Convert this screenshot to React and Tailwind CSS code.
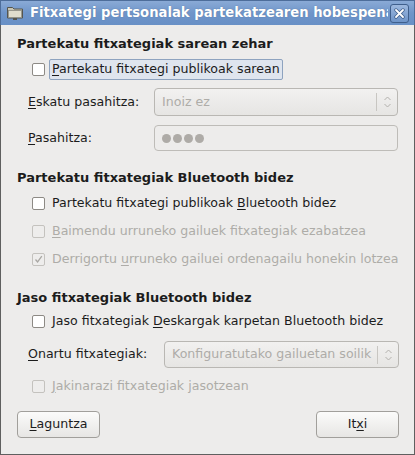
import React from 'react';

const font = { fontFamily: '"DejaVu Sans", Verdana, sans-serif' };

// mnemonic underline helper
const U = ({ children }) => <span className="underline underline-offset-2">{children}</span>;

const Check = ({ checked = false, disabled = false }) => (
  <span
    className={`flex h-[13px] w-[13px] shrink-0 items-center justify-center rounded-[2px] border ${
      disabled ? 'border-[#c4c2be] bg-[#eeedec]' : 'border-[#8d8a85] bg-white'
    }`}
  >
    {checked && (
      <svg width="9" height="9" viewBox="0 0 9 9">
        <path d="M1.5 4.5 L3.6 7 L7.8 1.2" fill="none" stroke="#a9a7a3" strokeWidth="1.3" />
      </svg>
    )}
  </span>
);

const CheckRow = ({ children, checked, disabled, focused, h = 'h-[28px]' }) => (
  <div className={`flex ${h} items-center pl-[31px]`}>
    <Check checked={checked} disabled={disabled} />
    <span
      className={`ml-[4px] flex h-[21px] items-center rounded-[2px] px-[2px] ${
        focused ? 'border border-[#8ea3bf] bg-[#dfe5ee]' : 'border border-transparent'
      } ${disabled ? 'text-[#aeaca8]' : 'text-[#1c1c1c]'}`}
    >
      <span className="whitespace-pre">{children}</span>
    </span>
  </div>
);

const Arrows = () => (
  <svg width="9" height="14" viewBox="0 0 9 14">
    <path d="M1.5 5 L4.5 2 L7.5 5 M1.5 9 L4.5 12 L7.5 9" fill="none" stroke="#b3b1ad" strokeWidth="1" />
  </svg>
);

const Combo = ({ text, className }) => (
  <div
    className={`flex items-center rounded-[4px] border border-[#b9b7b3] bg-gradient-to-b from-[#f2f1f0] to-[#e6e5e3] ${className}`}
  >
    <span className="flex-1 truncate pl-[7px] text-[#aeaca8]">{text}</span>
    <span className="h-[18px] w-px bg-[#c8c6c2]" />
    <span className="flex w-[20px] items-center justify-center">
      <Arrows />
    </span>
  </div>
);

const Heading = ({ children }) => (
  <div className="flex h-[18px] items-center pl-[16px] text-[13px] font-bold text-[#1c1c1c]">{children}</div>
);

const Button = ({ children, className }) => (
  <button
    className={`flex h-[27px] w-[83px] items-center justify-center rounded-[4px] border border-[#a19f9b] bg-gradient-to-b from-[#fbfbfa] to-[#e7e6e4] text-[#1c1c1c] ${className}`}
  >
    <span className="whitespace-pre">{children}</span>
  </button>
);

export default function App() {
  return (
    <div className="flex h-[455px] w-[415px] flex-col overflow-hidden text-[12.6px]" style={font}>
      {/* title bar */}
      <div className="flex h-[25px] shrink-0 items-center border border-b-0 border-[#4d6d9a] bg-gradient-to-b from-[#8aaad6] via-[#6f95c9] to-[#6890c6] pl-[5px] pr-[5px]">
        <svg width="18" height="16" viewBox="0 0 18 16" className="shrink-0">
          <path d="M1.5 2.5 h5 l1.5 1.5 h8.5 v9 h-15 z" fill="#c7c4b2" stroke="#55554f" strokeWidth="1" />
          <rect x="2.5" y="5.5" width="13" height="7" fill="#e0ddcd" stroke="#8b8a80" strokeWidth="0.8" />
          <rect x="7" y="13" width="4" height="2" fill="#55554f" />
        </svg>
        <span className="ml-[6px] flex-1 overflow-hidden whitespace-nowrap text-[13.2px] font-bold text-white [text-shadow:0_0_1px_#4b6a94]">
          Fitxategi pertsonalak partekatzearen hobespenak
        </span>
        <span className="ml-[2px] flex h-[19px] w-[19px] shrink-0 items-center justify-center rounded-[3px] border border-[#3f5f8c] bg-gradient-to-b from-[#9db8de] to-[#6e94c8]">
          <svg width="11" height="11" viewBox="0 0 11 11">
            <path d="M2 2 L9 9 M9 2 L2 9" stroke="#3f5f8c" strokeWidth="3.4" strokeLinecap="round" />
            <path d="M2 2 L9 9 M9 2 L2 9" stroke="#ffffff" strokeWidth="1.8" strokeLinecap="round" />
          </svg>
        </span>
      </div>

      {/* body */}
      <div className="flex flex-1 flex-col border border-t-0 border-[#5f5f5f] bg-[#edeceb] pt-[10px]">
        <Heading>Partekatu fitxategiak sarean zehar</Heading>
        <div className="mt-[5px]">
          <CheckRow focused h="h-[22px]">
            <U>P</U>artekatu fitxategi publikoak sarean
          </CheckRow>
        </div>

        <div className="mt-[8px] flex h-[28px] items-center pl-[27px] pr-[16px]">
          <span className="w-[126px] text-[#1c1c1c]">
            <U>E</U>skatu pasahitza:
          </span>
          <Combo text="Inoiz ez" className="h-[28px] flex-1" />
        </div>

        <div className="mt-[9px] flex h-[26px] items-center pl-[27px] pr-[16px]">
          <span className="w-[126px] text-[#1c1c1c]">
            <U>P</U>asahitza:
          </span>
          <div className="flex h-[26px] flex-1 items-center gap-[2px] rounded-[4px] border border-[#bebcb8] bg-[#edeceb] pl-[7px]">
            {[0, 1, 2, 3].map((i) => (
              <span key={i} className="h-[9px] w-[9px] rounded-full bg-[#aeaba7]" />
            ))}
          </div>
        </div>

        <div className="mt-[18px]">
          <Heading>Partekatu fitxategiak Bluetooth bidez</Heading>
        </div>
        <div className="mt-[2px]">
          <CheckRow>
            Partekatu fitxategi publikoak <U>B</U>luetooth bidez
          </CheckRow>
          <CheckRow disabled>
            <U>B</U>aimendu urruneko gailuek fitxategiak ezabatzea
          </CheckRow>
          <CheckRow disabled checked>
            Derrigortu <U>u</U>rruneko gailuei ordenagailu honekin lotzea
          </CheckRow>
        </div>

        <div className="mt-[16px]">
          <Heading>Jaso fitxategiak Bluetooth bidez</Heading>
        </div>
        <CheckRow>
          Jaso fitxategiak <U>D</U>eskargak karpetan Bluetooth bidez
        </CheckRow>

        <div className="mt-[6px] flex h-[27px] items-center pl-[27px] pr-[15px]">
          <span className="w-[136px] text-[#1c1c1c]">
            <U>O</U>nartu fitxategiak:
          </span>
          <Combo text="Konfiguratutako gailuetan soilik" className="h-[27px] flex-1" />
        </div>

        <div className="mt-[4px]">
          <CheckRow disabled>
            <U>J</U>akinarazi fitxategiak jasotzean
          </CheckRow>
        </div>

        <div className="mt-[11px] flex justify-between pl-[16px] pr-[15px]">
          <Button>
            <U>L</U>aguntza
          </Button>
          <Button>
            It<U>x</U>i
          </Button>
        </div>
      </div>
    </div>
  );
}
